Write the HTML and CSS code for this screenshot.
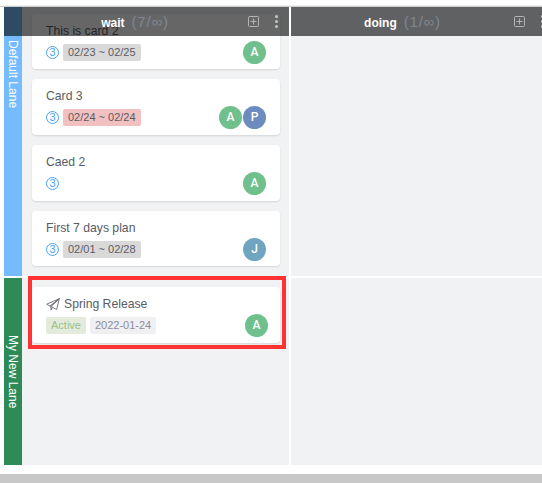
FILE: index.html
```html
<!DOCTYPE html>
<html lang="en">
<head>
    <meta charset="UTF-8">
    <meta name="viewport" content="width=device-width, initial-scale=1.0">
    <title>Board</title>
    <link rel="stylesheet" href="styles.css">
</head>
<body>
    <div class="board">
        <div class="lane lane-default">
            <div class="lane-label"><span>Default Lane</span></div>
            <div class="column">
                <div class="card">
                    <div class="card-title">This is card 2</div>
                    <div class="card-meta">
                        <div class="tags"><span class="points">3</span><span class="tag tag-grey">02/23 ~ 02/25</span></div>
                        <div class="avatars"><span class="avatar green">A</span></div>
                    </div>
                </div>
                <div class="card">
                    <div class="card-title">Card 3</div>
                    <div class="card-meta">
                        <div class="tags"><span class="points">3</span><span class="tag tag-pink">02/24 ~ 02/24</span></div>
                        <div class="avatars"><span class="avatar green">A</span><span class="avatar blue">P</span></div>
                    </div>
                </div>
                <div class="card">
                    <div class="card-title">Caed 2</div>
                    <div class="card-meta">
                        <div class="tags"><span class="points">3</span></div>
                        <div class="avatars"><span class="avatar green">A</span></div>
                    </div>
                </div>
                <div class="card">
                    <div class="card-title">First 7 days plan</div>
                    <div class="card-meta">
                        <div class="tags"><span class="points">3</span><span class="tag tag-grey">02/01 ~ 02/28</span></div>
                        <div class="avatars"><span class="avatar teal">J</span></div>
                    </div>
                </div>
            </div>
            <div class="column column-last"></div>
        </div>
        <div class="lane lane-new">
            <div class="lane-label"><span>My New Lane</span></div>
            <div class="column">
                <div class="card card-release">
                    <div class="card-title">
                        <svg class="plane" width="14" height="13" viewBox="0 0 14 13" fill="none" stroke="#6a6c74" stroke-width="0.9" stroke-linejoin="round"><path d="M13.3 .7 .7 6.2l3.4 1.9zM13.3 .7 10.6 11.6 6.6 9.3 4.1 8.1zM13.3 .7 5 8.6v3.6l1.6-2.9"/></svg>
                        Spring Release
                    </div>
                    <div class="card-meta">
                        <div class="tags"><span class="tag tag-active">Active</span><span class="tag tag-date">2022-01-24</span></div>
                        <div class="avatars"><span class="avatar green">A</span></div>
                    </div>
                </div>
            </div>
            <div class="column column-last"></div>
        </div>

        <div class="heads">
            <div class="head head-first">
                <div class="head-title">wait<span class="count">(7/∞)</span></div>
                <svg class="add" width="11" height="11" viewBox="0 0 11 11" fill="none" stroke="#b4b4b4"><rect x=".5" y=".5" width="10" height="10" rx="1"/><path d="M5.5 2.5v6M2.5 5.5h6"/></svg>
                <div class="dots"><i></i><i></i><i></i></div>
            </div>
            <div class="head">
                <div class="head-title">doing<span class="count">(1/∞)</span></div>
                <svg class="add" width="11" height="11" viewBox="0 0 11 11" fill="none" stroke="#b4b4b4"><rect x=".5" y=".5" width="10" height="10" rx="1"/><path d="M5.5 2.5v6M2.5 5.5h6"/></svg>
                <div class="dots"><i></i><i></i><i></i></div>
            </div>
        </div>

        <div class="highlight"></div>
    </div>
    <div class="scrollbar"></div>
</body>
</html>
```

FILE: styles.css
```css
html, body {
    margin: 0;
    padding: 0;
    height: 483px;
    overflow: hidden;
    background-color: #fff;
    font-family: "Liberation Sans", Arial, sans-serif;
}
.board {
    position: relative;
    margin-top: 5px;
    padding-left: 4px;
    height: 460px;
    border-top: 1px solid #f0f0f0;
    box-shadow: inset 0 1px 0 #cfcfcf;
    padding-top: 1px;
    box-sizing: border-box;
    overflow: hidden;
}
.lane {
    display: flex;
    overflow: hidden;
}
.lane-default {
    height: 269px;
    margin-bottom: 2px;
}
.lane-new {
    height: 187px;
}
.lane-label {
    width: 18px;
    flex: none;
    display: flex;
    flex-direction: column;
    align-items: center;
    color: #fff;
    font-size: 12px;
}
.lane-label span {
    writing-mode: vertical-rl;
}
.lane-default .lane-label {
    background-color: #74bbff;
    padding-top: 33px;
}
.lane-new .lane-label {
    background-color: #2e8b57;
    justify-content: center;
}
.column {
    width: 267px;
    flex: none;
    margin-right: 2px;
    padding: 6.6px 9px 0 10px;
    box-sizing: border-box;
    background-color: #f1f2f4;
    display: flex;
    flex-direction: column;
    gap: 10px;
}
.lane-new .column {
    padding-top: 9px;
}
.column-last {
    width: 251px;
    margin-right: 0;
}
.card {
    height: 55.7px;
    flex: none;
    padding: 8px 14px 6px;
    box-sizing: border-box;
    background-color: #fff;
    border-radius: 4px;
    box-shadow: 0 1px 2px rgba(0, 0, 0, 0.12);
    color: #5a5c66;
}
.card-title {
    font-size: 12.2px;
    line-height: 18px;
    height: 18px;
    margin-bottom: 1px;
    display: flex;
    align-items: center;
    gap: 4px;
}
.card-meta {
    display: flex;
    justify-content: space-between;
    align-items: center;
    height: 23px;
}
.tags {
    display: flex;
    align-items: center;
    gap: 4px;
}
.points {
    width: 13px;
    height: 13px;
    box-sizing: border-box;
    border: 1px solid #45a5f5;
    border-radius: 50%;
    color: #45a5f5;
    font-size: 11px;
    line-height: 11px;
    text-align: center;
}
.tag {
    height: 17px;
    line-height: 17px;
    padding: 0 5px;
    border-radius: 2px;
    font-size: 11px;
}
.tag-grey {
    background-color: #d9d9d9;
}
.tag-pink {
    background-color: #f2c0c0;
}
.tag-active {
    background-color: #e4ebdc;
    color: #9cc284;
}
.tag-date {
    background-color: #f0f0f2;
    color: #8a8c9c;
}
.avatars {
    display: flex;
    gap: 1px;
}
.avatar {
    width: 23px;
    height: 23px;
    border-radius: 50%;
    color: #fff;
    font-family: Roboto, sans-serif;
    font-size: 12px;
    font-weight: 500;
    line-height: 23px;
    text-align: center;
}
.green { background-color: #6fc08c; }
.blue { background-color: #6c8cc0; }
.teal { background-color: #6fa5c0; }
.card-release .avatars {
    margin-right: -2px;
}
.plane {
    flex: none;
}
.heads {
    position: absolute;
    top: 1px;
    left: 4px;
    display: flex;
    height: 29px;
}
.head {
    width: 264px;
    flex: none;
    display: flex;
    align-items: center;
    padding-right: 11px;
    box-sizing: border-box;
    background-color: rgba(0, 0, 0, 0.6);
}
.head-first {
    width: 285px;
    margin-right: 2px;
    padding-left: 18px;
}
.head-title {
    flex: 1;
    text-align: center;
    color: #fff;
    font-size: 12px;
    font-weight: bold;
}
.count {
    margin-left: 7px;
    color: #7d8791;
    font-size: 15px;
    font-weight: normal;
    letter-spacing: 0.8px;
}
.add {
    flex: none;
    margin-right: 16px;
}
.dots {
    width: 3px;
    display: flex;
    flex-direction: column;
    gap: 2px;
}
.dots i {
    display: block;
    height: 3px;
    border-radius: 50%;
    background-color: #c4c4c4;
}
.highlight {
    position: absolute;
    top: 270px;
    left: 28px;
    width: 258px;
    height: 73px;
    box-sizing: border-box;
    border: 4px solid #ff3333;
}
.scrollbar {
    height: 9px;
    margin-top: 9px;
    background-color: #c8c8c8;
}
```
